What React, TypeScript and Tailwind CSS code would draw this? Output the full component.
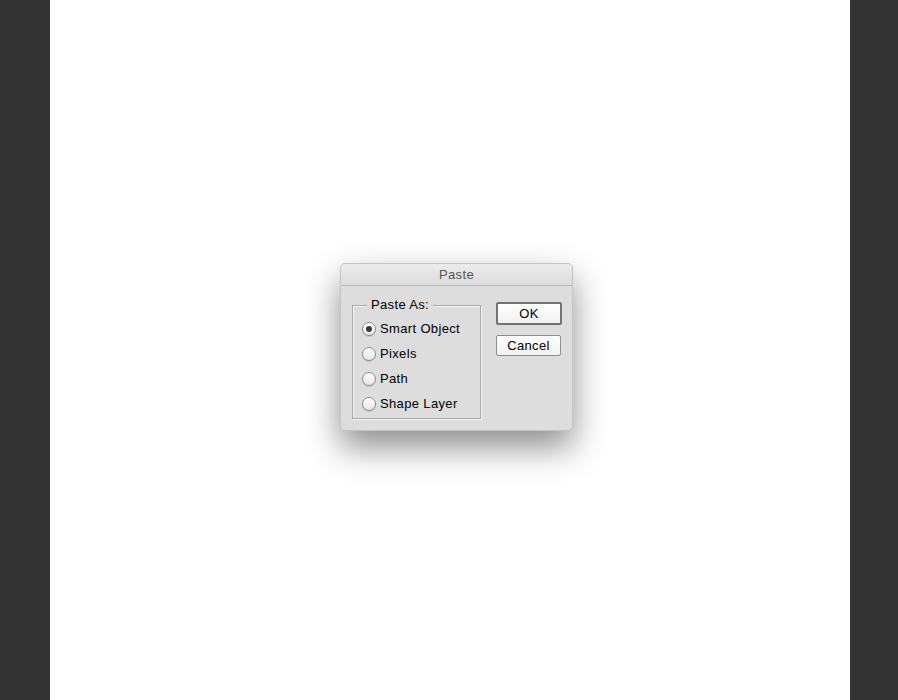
import React from 'react';

const options = ['Smart Object', 'Pixels', 'Path', 'Shape Layer'];

function Radio({ checked }: { checked?: boolean }) {
  return (
    <span className="flex h-[14px] w-[14px] items-center justify-center rounded-full border border-[#8c8c8c] bg-gradient-to-b from-white to-[#e6e6e6] shadow-[0_1px_1px_rgba(0,0,0,0.12)]">
      {checked && <span className="h-[6px] w-[6px] rounded-full bg-[#3a3a3a]" />}
    </span>
  );
}

export default function App() {
  return (
    <div
      className="flex h-[700px] w-[898px] text-[13px] text-black tracking-[0.35px]"
      style={{ fontFamily: '"Liberation Sans", Arial, sans-serif' }}
    >
      <div className="w-[50px] bg-[#333333]" />
      <div className="flex-1 bg-white pl-[290px] pt-[263px]">
        {/* dialog */}
        <div className="w-[233px] h-[168px] rounded-[5px] border border-[#c4c4c4] bg-[#dddddd] shadow-[0_16px_34px_rgba(0,0,0,0.45)] overflow-hidden">
          <div className="flex h-[22px] items-center justify-center border-b border-[#b9b9b9] bg-gradient-to-b from-[#ececec] to-[#dcdcdc] text-[#555555]">
            Paste
          </div>
          <div className="flex pl-[11px] pt-[19px]">
            {/* group box */}
            <div className="relative h-[114px] w-[129px] border border-[#a9a9a9] shadow-[inset_1px_1px_0_#f4f4f4,1px_1px_0_#f4f4f4]">
              <span className="absolute left-[14px] top-[-9px] bg-[#dddddd] px-[4px] leading-[16px]">
                Paste As:
              </span>
              <div className="flex flex-col gap-[9px] pl-[9px] pt-[15px]">
                {options.map((o, i) => (
                  <div key={o} className="flex h-[16px] items-center gap-[4px]">
                    <Radio checked={i === 0} />
                    <span className="leading-[16px]">{o}</span>
                  </div>
                ))}
              </div>
            </div>
            {/* buttons */}
            <div className="ml-[15px] flex flex-col -mt-[3px]">
              <button className="h-[23px] w-[66px] rounded-[2px] border-2 border-[#737373] bg-gradient-to-b from-white to-[#f1f1f1] leading-[19px]">
                OK
              </button>
              <button className="mt-[10px] h-[21px] w-[65px] rounded-[2px] border border-[#8e8e8e] bg-gradient-to-b from-white to-[#f1f1f1] leading-[19px]">
                Cancel
              </button>
            </div>
          </div>
        </div>
      </div>
      <div className="w-[48px] bg-[#333333]" />
    </div>
  );
}
